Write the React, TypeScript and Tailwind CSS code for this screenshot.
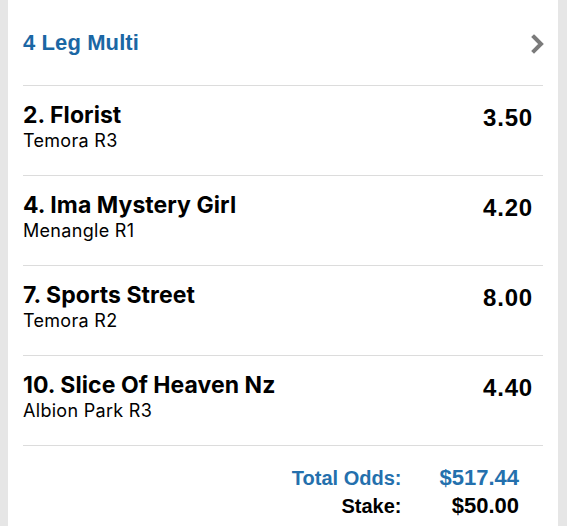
import React from "react";

const legs = [
  { name: "2. Florist", venue: "Temora R3", odds: "3.50" },
  { name: "4. Ima Mystery Girl", venue: "Menangle R1", odds: "4.20" },
  { name: "7. Sports Street", venue: "Temora R2", odds: "8.00" },
  { name: "10. Slice Of Heaven Nz", venue: "Albion Park R3", odds: "4.40" },
];

export default function App() {
  return (
    <div className="w-[567px] h-[526px] bg-[#e6e6e6] pl-[8px] pr-[9px] overflow-hidden">
      <div className="h-full bg-white px-[15px]">
        <div className="h-[86px] flex items-center justify-between border-b border-[#dcdcdc]">
          <span className="text-[#1b67a4] text-[22px] font-bold font-['Liberation_Sans',sans-serif] tracking-[0.1px]">
            4 Leg Multi
          </span>
          <svg width="14" height="20" viewBox="0 0 14 20" className="mr-[-2px] mt-[3px]">
            <path d="M3 3 L10 10 L3 17" fill="none" stroke="#7b7b7b" strokeWidth="4" strokeLinecap="square" strokeLinejoin="miter" />
          </svg>
        </div>
        {legs.map((l) => (
          <div key={l.name} className="h-[90px] border-b border-[#dcdcdc] flex justify-between pt-[15px]">
            <div className="flex flex-col">
              <span className="text-[23px] leading-[28px] font-bold text-black font-['Inter',sans-serif] tracking-[0.05px]">
                {l.name}
              </span>
              <span className="text-[18px] leading-[24px] text-black font-['Inter',sans-serif] tracking-[0.3px]">
                {l.venue}
              </span>
            </div>
            <span className="text-[24px] leading-[28px] pt-[3px] mr-[10px] font-bold text-black font-['Liberation_Sans',sans-serif] tracking-[0.8px]">
              {l.odds}
            </span>
          </div>
        ))}
        <div className="grid grid-cols-[auto_auto] justify-end gap-x-[38px] pr-[24px] pt-[18px] font-['Liberation_Sans',sans-serif] text-[20px] leading-[28px] font-bold">
          <span className="text-right text-[#2470ad]">Total Odds:</span>
          <span className="text-right text-[#2470ad] text-[22px]">$517.44</span>
          <span className="text-right text-black">Stake:</span>
          <span className="text-right text-black text-[22px]">$50.00</span>
        </div>
      </div>
    </div>
  );
}
